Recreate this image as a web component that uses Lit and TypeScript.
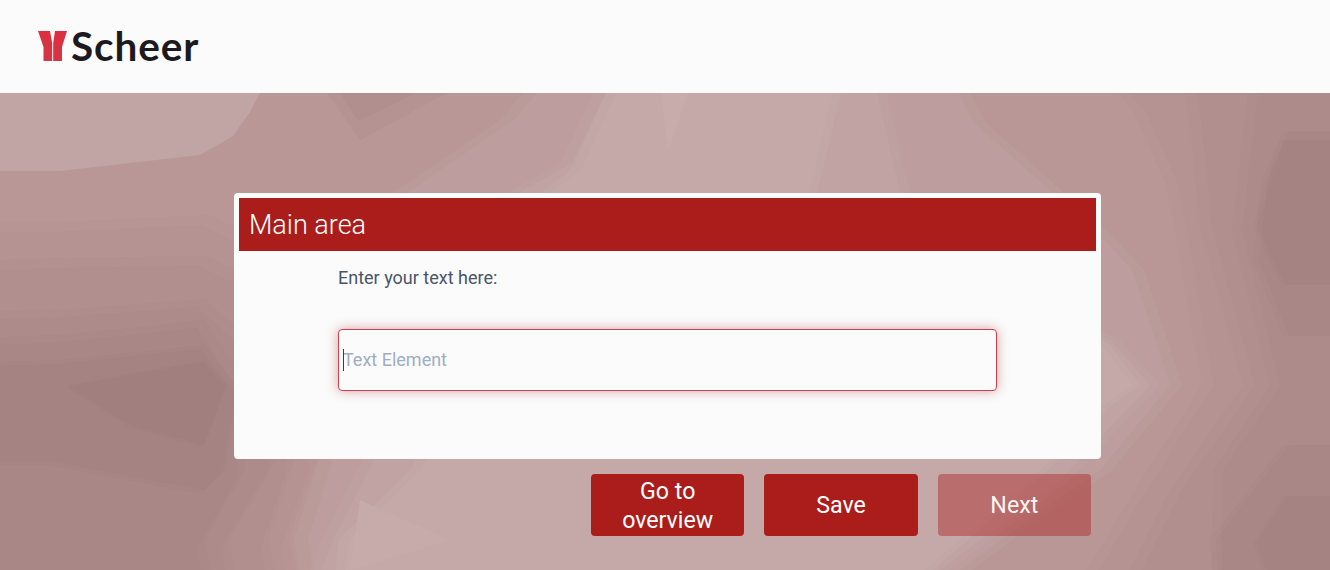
import { LitElement, html, css, svg } from "lit";
import { customElement } from "lit/decorators.js";

// Each contour is painted twice, the second copy shifted, so the edges step softly.
const DARK: [string, number, number][] = [
  ["0,93 616,93 581,170 550,193 500,330 420,470 348,540 346,570 0,570", -10, 0],
  ["0,93 606,93 572,163 519,193 450,300 375,459 333,540 322,570 0,570", -12, 0],
  ["0,93 537,93 514,120 407,193 360,300 333,459 308,540 313,570 0,570", -14, 0],
  ["0,222 60,222 210,215 300,260 317,459 288,540 296,570 0,570", -8, 10],
  ["0,260 60,258 205,256 280,290 295,459 268,540 275,570 0,570", -8, 10],
  ["0,311 60,310 205,299 260,350 277,459 229,540 235,570 0,570", -8, 8],
  ["0,337 60,335 205,320 245,380 245,470 205,540 210,570 0,570", -8, 8],
  ["0,362 60,360 205,345 240,390 225,470 205,490 50,461 0,461", -4, 4],
  ["68,385 205,360 227,385 205,445 130,425", -2, 2],
  ["327,93 360,140 447,93", 0, 0],
  ["340,93 358,121 416,93", 0, 0],
  ["833,93 809,193 1000,300 1100,343 1133,385 1100,408 1040,470 925,570 1330,570 1330,93", 8, 0],
  ["877,93 900,193 1010,290 1110,340 1150,385 1060,480 940,570 1330,570 1330,93", 10, 0],
  ["958,93 974,123 1000,146 1060,200 1100,236 1132,270 1170,385 1100,470 1000,540 960,570 1330,570 1330,93", 12, 0],
  ["1117,93 1133,110 1167,186 1175,231 1202,385 1133,493 1087,570 1330,570 1330,93", 12, 0],
  ["1185,93 1190,126 1200,226 1243,385 1170,490 1130,570 1330,570 1330,93", 12, 0],
  ["1248,93 1232,230 1270,385 1213,470 1212,570 1330,570 1330,93", 10, 0],
  ["1283,131 1330,131 1330,336 1283,336 1253,260 1262,180", 6, 0],
  ["1280,140 1330,140 1330,285 1282,285 1253,226", 4, 0],
  ["1330,445 1283,445 1210,540 1212,570 1330,570", 6, 0],
  ["1330,496 1283,496 1253,543 1263,570 1330,570", 4, 0],
];

@customElement("app-root")
export class AppRoot extends LitElement {
  static styles = css`
    :host {
      display: block;
      height: 570px;
      overflow: hidden;
      font-family: Roboto, "Liberation Sans", sans-serif;
      background: #fbfbfb;
    }
    .top {
      box-sizing: border-box;
      height: 93px;
      display: flex;
      align-items: center;
      gap: 3px;
      padding: 0 0 2px 38px;
      background: #fbfbfb;
    }
    .mark {
      width: 30px;
      height: 31px;
    }
    .word {
      font-family: Lato, "Open Sans", sans-serif;
      font-weight: 700;
      font-size: 40.5px;
      line-height: 46px;
      letter-spacing: 0.9px;
      color: #1c1a20;
    }
    .stage {
      display: grid;
      height: 477px;
    }
    .backdrop {
      grid-area: 1 / 1;
      width: 1330px;
      height: 477px;
      display: block;
    }
    .content {
      grid-area: 1 / 1;
      padding: 100px 0 0 234px;
    }
    .card {
      box-sizing: border-box;
      width: 867px;
      height: 266px;
      padding: 5px;
      background: #fbfbfb;
      border-radius: 4px;
    }
    .bar {
      height: 53px;
      display: flex;
      align-items: center;
      padding-left: 10px;
      background: #aa1d1a;
      color: #fff;
      font-size: 27px;
      font-weight: 300;
    }
    .body {
      padding: 14px 0 0 99px;
    }
    .label {
      height: 26px;
      line-height: 26px;
      font-size: 18px;
      color: #4a5568;
    }
    .field {
      position: relative;
      width: 659px;
      height: 62px;
      margin-top: 38px;
    }
    .field input {
      box-sizing: border-box;
      width: 100%;
      height: 100%;
      padding: 0 4px 2px;
      border: 1px solid #c8444a;
      border-radius: 4px;
      background: #fbfbfb;
      outline: none;
      box-shadow: 0 0 12px rgba(180, 50, 55, 0.45);
      font-family: inherit;
      font-size: 18px;
      color: #4a5568;
    }
    .field input::placeholder {
      color: #a0aec0;
      opacity: 1;
    }
    .caret {
      position: absolute;
      left: 5px;
      top: 20px;
      width: 1px;
      height: 22px;
      background: #2d3f55;
    }
    .actions {
      display: flex;
      justify-content: flex-end;
      gap: 20px;
      margin-top: 15px;
      padding-right: 10px;
      width: 857px;
    }
    button {
      width: 153.33px;
      height: 62px;
      padding: 1px 10px 0;
      border: 0;
      border-radius: 4px;
      background: #aa1d1a;
      color: #fff;
      font-family: inherit;
      font-size: 23.2px;
      line-height: 29px;
    }
    button.off {
      background: rgba(170, 29, 26, 0.42);
      color: rgba(255, 255, 255, 0.94);
    }
  `;

  render() {
    return html`
      <header class="top">
        <svg class="mark" viewBox="0 0 30 31" aria-hidden="true">
          <defs>
            <linearGradient id="yg" x1="0" y1="0" x2="1" y2="1">
              <stop offset="0" stop-color="#e22c3c" />
              <stop offset="1" stop-color="#cc3a4a" />
            </linearGradient>
          </defs>
          <path d="M0 1H12L14.2 13V31H5.5V17Z" fill="url(#yg)" />
          <path d="M29 1H17L15.2 13V31H24V17Z" fill="url(#yg)" />
        </svg>
        <span class="word">Scheer</span>
      </header>
      <main class="stage">
        <svg class="backdrop" viewBox="0 93 1330 477" preserveAspectRatio="none" aria-hidden="true">
          <rect x="0" y="93" width="1330" height="477" fill="#c5a9a9" />
          ${DARK.map(
            ([p, dx, dy]) => svg`
              <polygon points=${p} fill="#553535" fill-opacity="0.02" />
              <polygon points=${p} transform="translate(${dx} ${dy})" fill="#553535" fill-opacity="0.02" />
            `
          )}
          <polygon points="0,93 260,93 250,112 233,136 200,155 60,171 0,171" fill="#c1a5a5" />
          <polygon points="661,93 668,151 688,93" fill="#c8acac" />
          <polygon points="360,500 450,540 350,570" fill="#c7abab" />
        </svg>
        <div class="content">
          <section class="card">
            <div class="bar">Main area</div>
            <div class="body">
              <div class="label">Enter your text here:</div>
              <div class="field">
                <input type="text" placeholder="Text Element" />
                <span class="caret"></span>
              </div>
            </div>
          </section>
          <div class="actions">
            <button>Go to overview</button>
            <button>Save</button>
            <button class="off">Next</button>
          </div>
        </div>
      </main>
    `;
  }
}
